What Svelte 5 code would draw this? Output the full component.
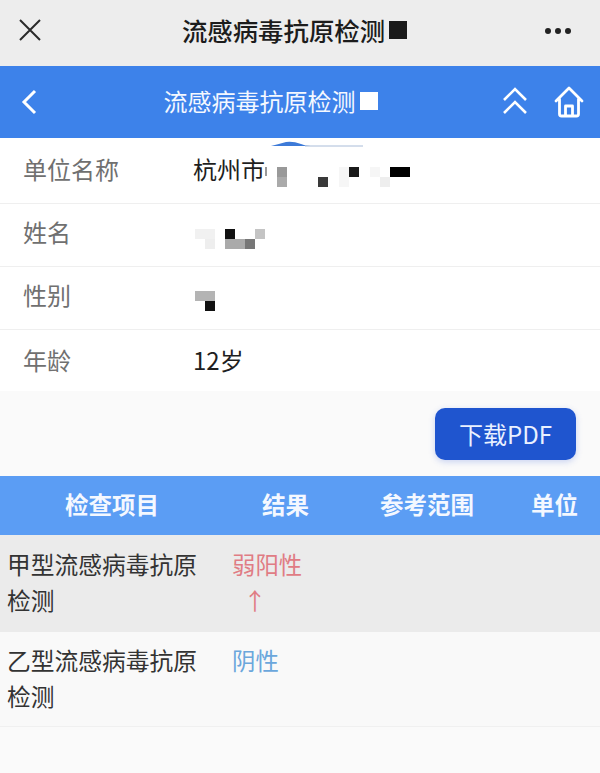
<script>
  const info = [
    { key: '单位名称', value: '杭州市', marks: 'unit' },
    { key: '姓名', value: '', marks: 'name' },
    { key: '性别', value: '', marks: 'sex' },
    { key: '年龄', value: '12岁', marks: '' }
  ];
  const px = {
    unit: [[85,12,2,9,'#999'],[97,12,10,10,'#999'],[97,22,10,10,'#aaa'],[138,22,10,10,'#3a3a3a'],[169,12,10,10,'#1a1a1a'],[159,12,10,20,'#f6f6f6'],[190,12,10,10,'#f6f6f6'],[200,22,10,10,'#eee'],[210,12,20,10,'#000']],
    name: [[15,11,20,10,'#f1f1f1'],[25,21,10,10,'#eee'],[45,11,10,10,'#111'],[45,21,20,10,'#aaa'],[65,21,10,10,'#777'],[75,11,10,10,'#c4c4c4']],
    sex: [[15,10,20,10,'#b4b4b4'],[25,20,10,10,'#111']]
  };
  const results = [
    { name: '甲型流感病毒抗原检测', res: '弱阳性', arrow: true, cls: 'pos' },
    { name: '乙型流感病毒抗原检测', res: '阴性', arrow: false, cls: 'neg' }
  ];
</script>

<div class="page">
  <header class="wx">
    <svg class="close" viewBox="0 0 24 24" width="24" height="24"><path d="M2 2 L22 22 M22 2 L2 22" stroke="#2a2a2a" stroke-width="2" fill="none"/></svg>
    <h1>流感病毒抗原检测<span class="sq dark"></span></h1>
    <div class="dots"><i></i><i></i><i></i></div>
  </header>

  <nav class="bar">
    <svg class="back" viewBox="0 0 16 26" width="16" height="26"><path d="M14 2 L3 13 L14 24" stroke="#fff" stroke-width="3" fill="none"/></svg>
    <div class="bar-title">流感病毒抗原检测<span class="sq light"></span></div>
    <svg class="up" viewBox="0 0 26 28" width="26" height="28"><path d="M2 13 L13 2 L24 13 M2 26 L13 15 L24 26" stroke="#fff" stroke-width="2.6" fill="none"/></svg>
    <svg class="home" viewBox="0 0 30 32" width="30" height="32"><path d="M2 15 L15 2 L28 15 M5.500 13 V28 Q5.500 30 7.500 30 H22.500 Q24.500 30 24.500 28 V13 M11.500 30 V20 H18.500 V30" stroke="#fff" stroke-width="2.800" fill="none" stroke-linejoin="round" stroke-linecap="round"/></svg>
  </nav>

  <section class="info">
    <svg class="sliver" viewBox="0 0 92 6" width="92" height="6"><path d="M0 5 Q8 3 15 1 Q22 0 30 3 Q34 5 40 5 Z" fill="#3d7ad8"/><path d="M34 5 H92" stroke="#a9bcd8" stroke-width="1" fill="none"/></svg>
    {#each info as row}
      <div class="row">
        <span class="key">{row.key}</span>
        <span class="val">{row.value}</span>
        {#if row.marks}
          <div class="mosaic">
            {#each px[row.marks] as p}
              <b style="left:{p[0]}px;top:{p[1]}px;width:{p[2]}px;height:{p[3]}px;background:{p[4]}"></b>
            {/each}
          </div>
        {/if}
      </div>
    {/each}
  </section>

  <div class="actions"><button>下载PDF</button></div>

  <div class="thead">
    <span class="c1">检查项目</span><span class="c2">结果</span><span class="c3">参考范围</span><span class="c4">单位</span>
  </div>
  {#each results as r, i}
    <div class="trow" class:odd={i === 0}>
      <div class="name">{r.name}</div>
      <div class="res {r.cls}">{r.res}{#if r.arrow}<span class="arrow">↑</span>{/if}</div>
    </div>
  {/each}
</div>

<style>
  :global(body) { margin: 0; background: #fafafa; }
  .page { width: 600px; height: 773px; overflow: hidden; background: #fafafa; font-family: "Noto Sans CJK SC", "Noto Sans", sans-serif; }
  .wx { height: 66px; background: #ededed; display: flex; align-items: center; justify-content: center; position: relative; }
  .close { position: absolute; left: 18px; top: 18px; }
  h1 { margin: 0 0 7px -11px; font-size: 25.4px; font-weight: 500; color: #1c1c1c; line-height: 32px; display: flex; align-items: center; }
  .sq { display: inline-block; width: 18px; height: 18px; margin-left: 4px; }
  .dark { background: #1a1a1a; }
  .light { background: #fff; }
  .dots { position: absolute; left: 545px; top: 28px; display: flex; gap: 4px; }
  .dots i { width: 6px; height: 6px; border-radius: 50%; background: #222; }
  .bar { height: 72px; background: #3d82ea; position: relative; display: flex; align-items: center; justify-content: center; }
  .back { position: absolute; left: 21px; top: 23px; }
  .up { position: absolute; left: 502px; top: 21px; }
  .home { position: absolute; left: 554px; top: 20px; }
  .bar-title { color: #f4f8ff; font-size: 24px; line-height: 30px; margin: 0 0 2px -59px; display: flex; align-items: center; }
  .info { background: #fff; position: relative; padding-top: 3px; }
  .sliver { position: absolute; left: 271px; top: 3px; }
  .row { height: 62px; display: flex; align-items: center; border-bottom: 1px solid #efefef; position: relative; }
  .row:last-child { border-bottom: none; height: 61px; }
  .key { width: 193px; padding: 0 0 7px 23px; box-sizing: border-box; font-size: 24px; color: #707070; }
  .val { font-size: 24px; color: #1f1f1f; padding-bottom: 7px; }
  .row:last-child .key, .row:last-child .val { padding-bottom: 3px; }
  .mosaic { position: absolute; left: 180px; top: 14px; }
  .mosaic b { position: absolute; display: block; }
  .actions { height: 85px; background: #fafafa; display: flex; justify-content: flex-end; align-items: flex-start; padding: 17px 24px 0 0; box-sizing: border-box; }
  button { width: 141px; height: 52px; border: 0; border-radius: 10px; background: #1f55cf; color: #eaf1ff; font: 400 24px "Noto Sans CJK SC", sans-serif; box-shadow: 0 2px 6px rgba(60, 100, 220, .25); padding: 0 0 1px; }
  .thead { height: 59px; background: #5b9df4; display: flex; align-items: center; color: #f4f8ff; font-size: 23.5px; font-weight: 700; position: relative; }
  .thead span { position: absolute; top: 13px; line-height: 30px; }
  .c1 { left: 65px; }
  .c2 { left: 262px; }
  .c3 { left: 380px; }
  .c4 { left: 531px; }
  .trow { height: 95px; display: flex; padding: 10px 0 0 7px; box-sizing: border-box; background: #f9f9f9; border-bottom: 1px solid #f0f0f0; font-size: 23.75px; line-height: 36px; color: #333; }
  .trow.odd { background: #ebebeb; border-bottom: 0; height: 97px; padding-top: 11px; }
  .name { width: 225px; padding-right: 20px; box-sizing: border-box; }
  .res { width: 74px; font-size: 23.4px; }
  .arrow { display: block; text-align: center; width: 46px; }
  .pos { color: #e07c84; }
  .neg { color: #6ba7dc; }
</style>
